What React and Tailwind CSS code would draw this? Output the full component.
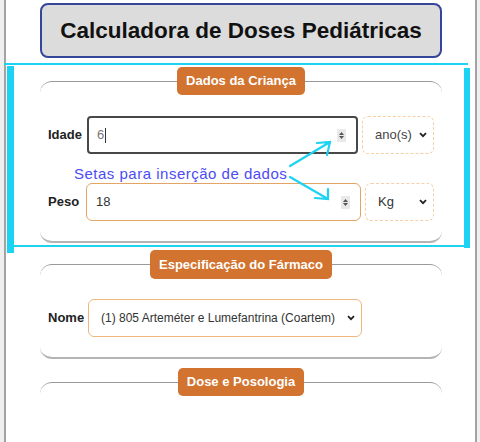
import React from "react";

const font = { fontFamily: '"Liberation Sans", Arial, sans-serif' };

function Spinner() {
  return (
    <div className="ml-auto mr-[10px] flex h-[13px] w-[9px] flex-col items-center justify-center gap-[1px] bg-[#e9e9e9]">
      <svg width="5" height="3" viewBox="0 0 5 3">
        <path d="M0 3 L2.5 0 L5 3 Z" fill="#555" />
      </svg>
      <svg width="5" height="3" viewBox="0 0 5 3">
        <path d="M0 0 L2.5 3 L5 0 Z" fill="#555" />
      </svg>
    </div>
  );
}

function Chevron() {
  return (
    <svg width="8" height="6" viewBox="0 0 8 6" className="ml-auto mr-[6px] shrink-0">
      <path d="M1 1.2 L4 4.2 L7 1.2" fill="none" stroke="#222" strokeWidth="1.8" />
    </svg>
  );
}

function Legend({ children, h }) {
  return (
    <div className="flex justify-center">
      <div
        className={`-mt-[15px] flex items-center rounded-[5px] bg-[#d2732f] px-[9px] text-[13px] font-bold text-white ${h}`}
      >
        {children}
      </div>
    </div>
  );
}

export default function App() {
  return (
    <div className="relative h-[442px] w-[480px] overflow-hidden bg-[#efefef]" style={font}>
      <div className="ml-[4px] mr-[3px] h-full border-x-2 border-[#a3a3a3] bg-white pl-[34px] pr-[33px] pt-[3px]">
        {/* titulo */}
        <div className="flex h-[55px] items-center justify-center rounded-lg border-2 border-[#34459a] bg-[#dcdcdc] text-[22.5px] font-bold text-[#111]">
          Calculadora de Doses Pediátricas
        </div>

        {/* Dados da Criança */}
        <section className="mt-[23px] rounded-[12px] border-t border-b-2 border-t-[#9a9a9a] border-b-[#b4b4b4] pb-[20px]">
          <Legend h="h-[28px]">Dados da Criança</Legend>
          <div className="mt-[21px] flex items-center pl-2">
            <span className="w-[39px] text-[13px] font-bold text-[#222]">Idade</span>
            <div className="flex h-[38px] w-[271px] items-center rounded-[4px] border-2 border-[#484848] pl-[8px] text-[13px] text-[#777]">
              6<span className="ml-[1px] h-[15px] w-px bg-[#333]" />
              <Spinner />
            </div>
            <div className="ml-[4px] flex h-[38px] w-[72px] items-center rounded-[6px] border border-dashed border-[#f6cfa8] pl-[12px] text-[13px] text-[#444]">
              ano(s)
              <Chevron />
            </div>
          </div>
          <div className="mt-[29px] flex items-center pl-2">
            <span className="w-[38px] text-[13px] font-bold text-[#222]">Peso</span>
            <div className="flex h-[38px] w-[275px] items-center rounded-[6px] border border-[#e3a465] pl-[9px] text-[13px] text-[#333]">
              18
              <Spinner />
            </div>
            <div className="ml-[4px] flex h-[38px] w-[69px] items-center rounded-[6px] border border-dashed border-[#f6cfa8] pl-[12px] text-[13px] text-[#333]">
              Kg
              <Chevron />
            </div>
          </div>
        </section>

        {/* Especificação do Fármaco */}
        <section className="mt-[21px] rounded-[12px] border-t border-b-2 border-t-[#9a9a9a] border-b-[#b4b4b4] pb-[20px]">
          <Legend h="h-[29px]">Especificação do Fármaco</Legend>
          <div className="mt-[20px] flex items-center pl-2">
            <span className="w-[40px] text-[13px] font-bold text-[#222]">Nome</span>
            <div className="flex h-[38px] w-[274px] items-center rounded-[6px] border border-[#efb77d] pl-[12px] text-[12px] text-[#333]">
              (1) 805 Arteméter e Lumefantrina (Coartem)
              <Chevron />
            </div>
          </div>
        </section>

        {/* Dose e Posologia */}
        <section className="mt-[23px] h-[80px] rounded-t-[12px] border-t border-t-[#9a9a9a]">
          <Legend h="h-[28px]">Dose e Posologia</Legend>
        </section>
      </div>

      {/* anotação */}
      <div className="absolute left-[4px] top-[63px] h-[2px] w-[464px] bg-[#1cd3f3]" />
      <div className="absolute left-[7px] top-[66px] h-[187px] w-[7px] bg-[#1cd3f3]" />
      <div className="absolute left-[464px] top-[68px] h-[180px] w-[6px] bg-[#1cd3f3]" />
      <div className="absolute left-[14px] top-[245px] h-[2px] w-[456px] bg-[#1cd3f3]" />
      <div className="absolute left-[74px] top-[163px] text-[15px] tracking-[0.5px] text-[#4c4cf5]">
        Setas para inserção de dados
      </div>
      <svg className="absolute left-0 top-0" width="480" height="442">
        <g fill="none" stroke="#1cd3f3" strokeWidth="2.2" strokeLinecap="round">
          <path d="M290 166 L330 142 M317 143 L330 142 L327 155" />
          <path d="M290 177 L328 199 M328 189 L328 199 L315 198" />
        </g>
      </svg>
    </div>
  );
}
